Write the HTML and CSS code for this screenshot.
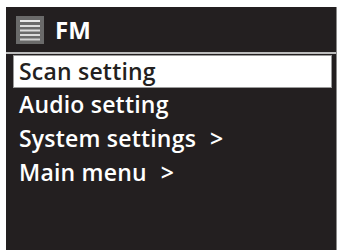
FILE: index.html
```html
<!DOCTYPE html>
<html>
<head>
<meta charset="utf-8">
<link rel="stylesheet" href="styles.css">
</head>
<body>
<div class="screen">
  <div class="header">
    <svg class="icon" width="28" height="28" viewBox="0 0 28 28">
      <rect x="0" y="0" width="28" height="28" fill="#6a6a6a"/>
      <rect x="4" y="4" width="20" height="2" fill="#e8e8e8"/>
      <rect x="4" y="9" width="20" height="2" fill="#dcdcdc"/>
      <rect x="4" y="13.5" width="20" height="2" fill="#dcdcdc"/>
      <rect x="4" y="18" width="20" height="2" fill="#dcdcdc"/>
      <rect x="4" y="22.5" width="20" height="2" fill="#d0d0d0"/>
    </svg>
    <span class="title">FM</span>
  </div>
  <div class="sep"></div>
  <ul class="menu">
    <li class="item selected">Scan setting</li>
    <li class="item">Audio setting</li>
    <li class="item">System settings<span class="arrow">&gt;</span></li>
    <li class="item">Main menu<span class="arrow">&gt;</span></li>
  </ul>
</div>
</body>
</html>
```
FILE: styles.css
```css
html, body {
  margin: 0;
  padding: 0;
  background: #ffffff;
}
body {
  width: 339px;
  height: 251px;
  overflow: hidden;
  padding-top: 7px;
  padding-left: 6px;
  box-sizing: border-box;
}
.screen {
  width: 331px;
  height: 243px;
  background: #231f20;
  border-right: 1px solid #8a8a8a;
  box-sizing: border-box;
  font-family: "Open Sans", "DejaVu Sans", sans-serif;
  font-weight: 600;
  color: #ffffff;
}
.header {
  height: 45px;
  display: flex;
  align-items: center;
  padding-left: 10px;
  gap: 11px;
}
.icon {
  display: block;
  margin-top: 1px;
}
.title {
  font-size: 24px;
  font-weight: 700;
  line-height: 1;
}
.sep {
  height: 2px;
  background: #bdbdbd;
  margin-bottom: 1px;
}
.menu {
  list-style: none;
  margin: 0;
  padding: 0 0 0 7px;
}
.item {
  width: 319px;
  height: 34px;
  box-sizing: border-box;
  padding-left: 6px;
  font-size: 23px;
  line-height: 30px;
  letter-spacing: 0.2px;
  white-space: nowrap;
}
.arrow {
  margin-left: 14px;
}
.selected {
  height: 33px;
  background: #ffffff;
  color: #231f20;
  border: 1px solid #9a9a9a;
  padding-left: 5px;
  margin-bottom: 1px;
}
```
